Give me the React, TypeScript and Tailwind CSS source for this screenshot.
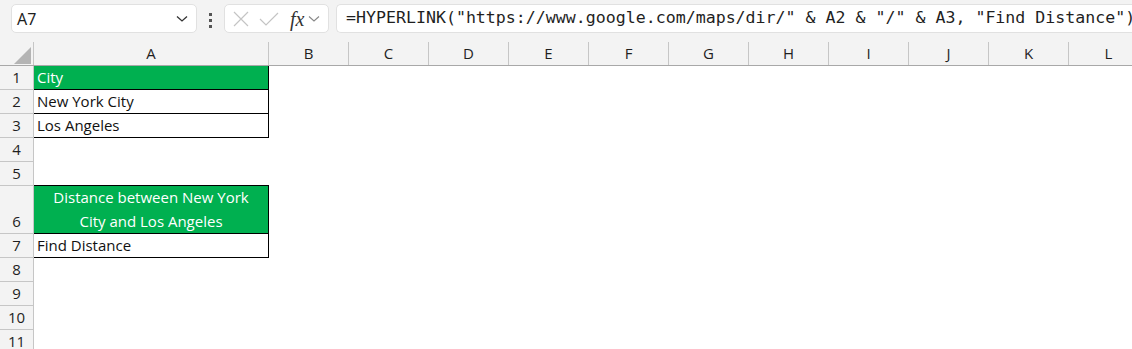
import React from 'react';

const cols = ['B', 'C', 'D', 'E', 'F', 'G', 'H', 'I', 'J', 'K', 'L'];

type Row = {
  n: number;
  h: string;
  text?: string;
  green?: boolean;
  boxed?: boolean;
  topOfBox?: boolean;
};

const rows: Row[] = [
  { n: 1, h: 'h-[24px]', text: 'City', green: true, boxed: true },
  { n: 2, h: 'h-[24px]', text: 'New York City', boxed: true },
  { n: 3, h: 'h-[24px]', text: 'Los Angeles', boxed: true },
  { n: 4, h: 'h-[24px]' },
  { n: 5, h: 'h-[24px]', topOfBox: true },
  { n: 6, h: 'h-[48px]', text: 'Distance between New York City and Los Angeles', green: true, boxed: true },
  { n: 7, h: 'h-[24px]', text: 'Find Distance', boxed: true },
  { n: 8, h: 'h-[24px]' },
  { n: 9, h: 'h-[24px]' },
  { n: 10, h: 'h-[24px]' },
  { n: 11, h: 'h-[24px]' },
];

const cellFont = { fontFamily: '"Open Sans", "Noto Sans", sans-serif' };

function Toolbar() {
  return (
    <div className="flex h-[41px] items-start bg-[#f3f3f3] pt-[4px]">
      <div className="ml-[11px] flex h-[29px] w-[186px] shrink-0 items-center justify-between rounded-[5px] border border-[#e1e1e1] bg-white pl-[5px] pr-[8px]">
        <span className="text-[16px] text-[#1f1f1f]" style={{ fontFamily: '"Noto Sans", sans-serif' }}>A7</span>
        <svg width="12" height="8" viewBox="0 0 12 8" fill="none">
          <path d="M1 1.5 L6 6 L11 1.5" stroke="#333" strokeWidth="1.3" />
        </svg>
      </div>
      <div className="ml-[12px] mr-[12px] mt-[9px] flex shrink-0 flex-col gap-[3px]">
        <span className="block h-[3px] w-[3px] bg-[#555]" />
        <span className="block h-[3px] w-[3px] bg-[#555]" />
        <span className="block h-[3px] w-[3px] bg-[#555]" />
      </div>
      <div className="flex h-[29px] w-[105px] shrink-0 items-center rounded-[5px] border border-[#e1e1e1] bg-white pl-[7px]">
        <svg width="18" height="18" viewBox="0 0 18 18" fill="none">
          <path d="M2 2 L16 16 M16 2 L2 16" stroke="#c4c4c4" strokeWidth="1.2" />
        </svg>
        <svg width="22" height="18" viewBox="0 0 22 18" className="ml-[8px]" fill="none">
          <path d="M2 9 L8 15 L20 3" stroke="#c4c4c4" strokeWidth="1.2" />
        </svg>
        <span className="ml-[10px] text-[20px] italic leading-none text-[#333]" style={{ fontFamily: '"Liberation Serif", serif' }}>fx</span>
        <svg width="12" height="8" viewBox="0 0 12 8" className="ml-[4px]" fill="none">
          <path d="M1 1.5 L6 6 L11 1.5" stroke="#888" strokeWidth="1.1" />
        </svg>
      </div>
      <div className="ml-[7px] flex h-[29px] min-w-0 flex-1 items-center overflow-hidden whitespace-nowrap rounded-l-[5px] border border-r-0 border-[#e1e1e1] bg-white pl-[9px]">
        <span className="text-[16.6px] text-[#1f1f1f]" style={{ fontFamily: '"DejaVu Sans Mono", monospace' }}>
          =HYPERLINK("https://www.google.com/maps/dir/" &amp; A2 &amp; "/" &amp; A3, "Find Distance")
        </span>
      </div>
    </div>
  );
}

function HeaderRow() {
  return (
    <div className="flex h-[25px] overflow-hidden border-b border-[#a8a8a8] bg-[#f3f3f3] text-[15px] text-[#1f1f1f]" style={cellFont}>
      <div className="relative mt-[1px] w-[34px] shrink-0 border-r border-[#c6c6c6]">
        <svg width="17" height="17" viewBox="0 0 17 17" className="absolute left-[14px] top-[5px]">
          <path d="M17 0 L17 17 L0 17 Z" fill="#b4b4b4" />
        </svg>
      </div>
      <div className="mt-[1px] flex w-[235px] shrink-0 items-center justify-center border-r border-[#c6c6c6]">A</div>
      {cols.map((c) => (
        <div key={c} className="mt-[1px] flex w-[80px] shrink-0 items-center justify-center border-r border-[#c6c6c6]">
          {c}
        </div>
      ))}
    </div>
  );
}

function GridRow({ r }: { r: Row }) {
  const cellCls = r.green
    ? 'bg-[#00b050] text-white border-r border-b border-black'
    : r.boxed
    ? 'bg-white text-[#111] border-r border-b border-black'
    : r.topOfBox
    ? 'bg-white border-b border-black'
    : 'bg-white';
  return (
    <div className={`flex ${r.h}`}>
      <div className="flex w-[34px] shrink-0 items-end justify-center border-r border-b border-[#c6c6c6] bg-[#f3f3f3] pb-[1px] text-[15px] leading-[22px] text-[#1f1f1f]" style={cellFont}>
        {r.n}
      </div>
      <div
        className={`flex w-[235px] shrink-0 text-[15px] leading-[24px] ${cellCls} ${
          r.n === 6 ? 'items-end justify-center text-center' : 'items-end pl-[3px]'
        }`}
        style={cellFont}
      >
        {r.text && <span className={r.n === 6 ? 'px-[8px]' : ''}>{r.text}</span>}
      </div>
      <div className="flex-1 bg-white" />
    </div>
  );
}

export default function App() {
  return (
    <div className="h-[349px] w-[1132px] overflow-hidden bg-white">
      <Toolbar />
      <HeaderRow />
      {rows.map((r) => (
        <GridRow key={r.n} r={r} />
      ))}
    </div>
  );
}
